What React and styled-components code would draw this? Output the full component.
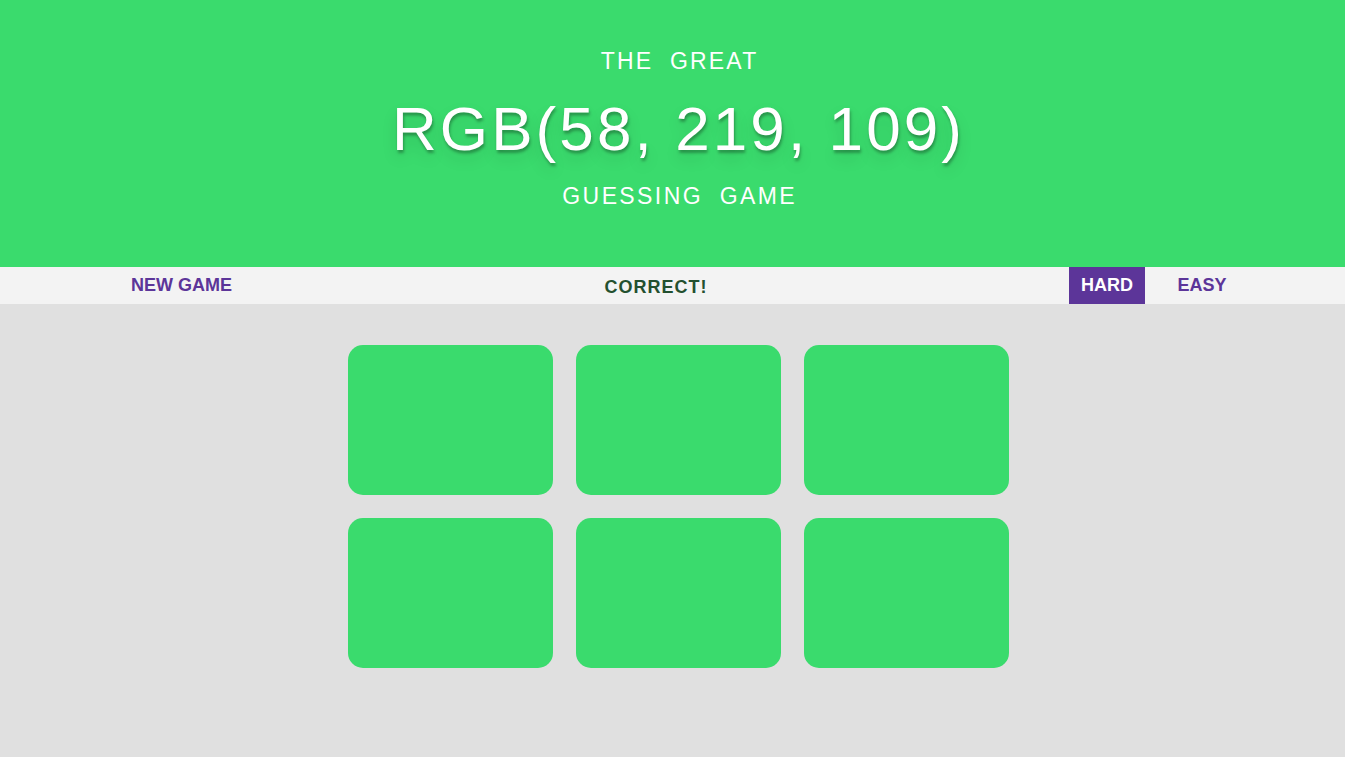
import React, { useState } from "react";
import styled, { createGlobalStyle } from "styled-components";

const GlobalStyle = createGlobalStyle`
body {
    margin: 0;
    background: #e0e0e0;
    font-family: "Liberation Sans", Arial, sans-serif;
}
`;

const target = "rgb(58, 219, 109)";

export default function App() {
    const [mode, setMode] = useState("hard");
    const colors = Array(6).fill(target);

    return (
        <>
            <GlobalStyle />
            <Header color={target}>
                <SmallLine spacing={2.2}>The Great</SmallLine>
                <BigLine>{target.toUpperCase()}</BigLine>
                <SmallLine spacing={2.4}>Guessing Game</SmallLine>
            </Header>
            <Stripe>
                <NewGame>NEW GAME</NewGame>
                <Message>CORRECT!</Message>
                <ModeButton active={mode === "hard"} onClick={() => setMode("hard")}>HARD</ModeButton>
                <ModeButton wide active={mode === "easy"} onClick={() => setMode("easy")}>EASY</ModeButton>
            </Stripe>
            <BoardWrap>
                <Board>
                    {colors.map((c, i) => (
                        <Square key={i} style={{ background: c }} />
                    ))}
                </Board>
            </BoardWrap>
        </>
    );
}

const Header = styled.header`
background: ${p => p.color};
color: #fff;
height: 267px;
box-sizing: border-box;
padding: 49px 0 0 12px;
display: flex;
flex-direction: column;
align-items: center;
text-align: center;
`;
const SmallLine = styled.div`
font-size: 23px;
line-height: 25px;
letter-spacing: ${p => p.spacing}px;
word-spacing: 8px;
text-transform: uppercase;
padding-left: ${p => p.spacing}px;
`;
const BigLine = styled.div`
font-size: 62px;
line-height: 71px;
letter-spacing: 3.1px;
margin: 19px 0 20px;
padding-left: 0;
text-shadow: 1px 3px 3px rgba(0, 0, 0, 0.3), 0 8px 16px rgba(0, 0, 0, 0.12);
`;
const Stripe = styled.nav`
display: flex;
align-items: stretch;
height: 37px;
background: #f3f3f3;
padding: 0 86px 0 114px;
font-weight: bold;
font-size: 18px;
`;
const NewGame = styled.button`
border: none;
background: none;
font: inherit;
color: #5c3599;
padding: 0 17px;
cursor: pointer;
`;
const Message = styled.div`
flex: 1;
display: flex;
align-items: center;
justify-content: center;
padding: 3px 6px 0 0;
color: #23502f;
letter-spacing: 1px;
`;
const ModeButton = styled.button`
border: none;
font: inherit;
cursor: pointer;
width: ${p => (p.wide ? "114px" : "76px")};
padding: 0;
background: ${p => (p.active ? "#5c3599" : "transparent")};
color: ${p => (p.active ? "#fff" : "#5c3599")};
`;
const BoardWrap = styled.main`
display: flex;
justify-content: center;
padding: 41px 0 0 12px;
`;
const Board = styled.div`
display: grid;
grid-template-columns: repeat(3, 205px);
grid-auto-rows: 150px;
gap: 23px;
`;
const Square = styled.div`
border-radius: 15px;
`;
